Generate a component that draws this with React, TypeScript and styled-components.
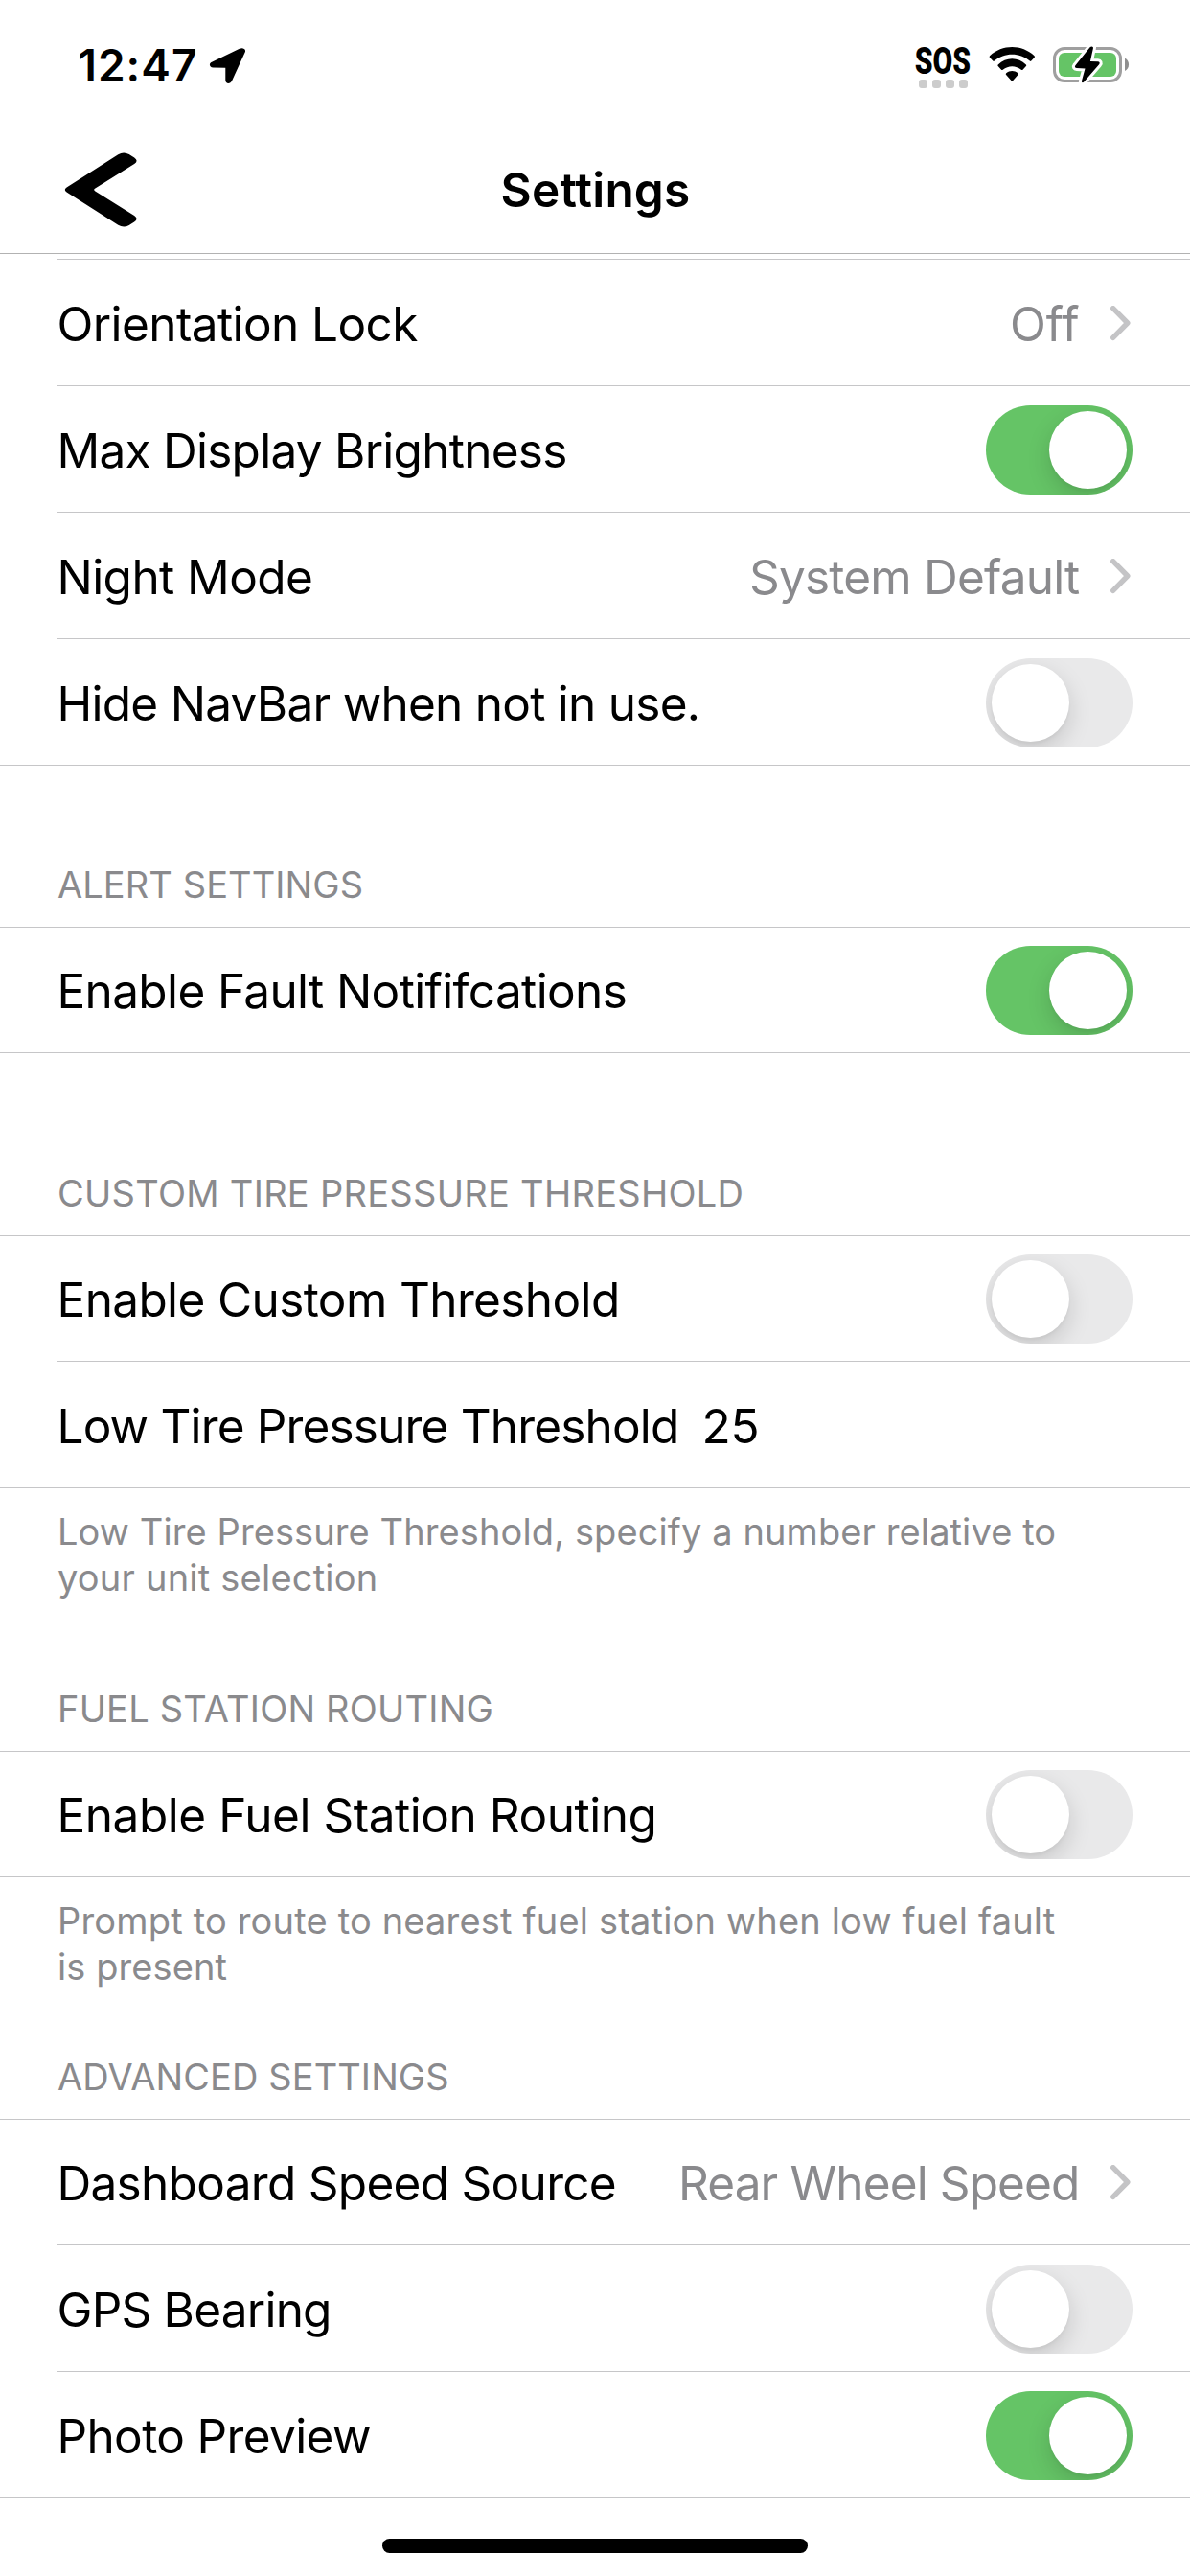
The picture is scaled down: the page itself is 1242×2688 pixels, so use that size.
import React from "react";
import styled, { createGlobalStyle } from "styled-components";

const Global = createGlobalStyle`
  * { box-sizing: border-box; }
  body {
    margin: 0;
    background: #fff;
    color: #000;
    font-family: Inter, "Liberation Sans", sans-serif;
  }
`;

const Screen = styled.div`
  width: 1242px;
  height: 2688px;
  display: flex;
  flex-direction: column;
  overflow: hidden;
  background: #fff;
`;

const StatusBar = styled.header`
  height: 136px;
  flex: none;
  display: flex;
  justify-content: space-between;
  align-items: flex-start;
  padding: 38px 63px 0 81.5px;
`;

const StatusGroup = styled.div<{ $gap: number }>`
  display: flex;
  align-items: flex-start;
  gap: ${(p) => p.$gap}px;
`;

const Time = styled.span`
  font-size: 46px;
  font-weight: 600;
  line-height: 60px;
  letter-spacing: 1px;
`;

const StatusIcon = styled.svg<{ $top: number; $end?: number }>`
  display: block;
  margin-top: ${(p) => p.$top}px;
  margin-right: ${(p) => p.$end ?? 0}px;
  overflow: visible;
`;

const Sos = styled.div`
  width: 59px;
  margin-top: 9px;
  display: flex;
  flex-direction: column;
  align-items: center;
`;

const SosText = styled.span`
  font: 900 38px/34px Roboto, sans-serif;
  transform: scaleX(0.79);
`;

const Dots = styled.div`
  display: flex;
  gap: 5px;
  margin-top: 2px;
`;

const Dot = styled.i`
  width: 9px;
  height: 9px;
  border-radius: 3px;
  background: #cccccc;
`;

const NavBar = styled.nav`
  height: 129px;
  flex: none;
  display: grid;
  grid-template-columns: 1fr auto 1fr;
  align-items: center;
  padding-bottom: 4px;
  border-bottom: 1px solid #b2b2b2;
`;

const BackButton = styled.button`
  justify-self: start;
  margin: 0 0 0 67px;
  padding: 0;
  border: 0;
  background: none;
  svg { display: block; }
`;

const Title = styled.h1`
  margin: 0;
  padding-left: 1px;
  font-size: 49.5px;
  font-weight: 600;
  line-height: 60px;
  letter-spacing: 0.2px;
`;

const Content = styled.main`
  flex: 1;
  padding-top: 5px;
`;

const Separator = styled.div<{ $inset?: boolean }>`
  height: 1px;
  margin-left: ${(p) => (p.$inset ? 60 : 0)}px;
  background: #c6c6c8;
`;

const RowBody = styled.div<{ $first?: boolean }>`
  height: ${(p) => (p.$first ? 130 : 131)}px;
  padding: ${(p) => (p.$first ? 1 : 2)}px 60px 0 59.5px;
  display: flex;
  align-items: center;
`;

const Label = styled.span<{ $tracking: number }>`
  font-size: 49.5px;
  line-height: 60px;
  white-space: nowrap;
  letter-spacing: ${(p) => p.$tracking}px;
`;

const Value = styled(Label)`
  margin-left: auto;
  margin-right: 31.5px;
  color: #8a8a8d;
`;

const FieldValue = styled(Label)`
  margin-left: 24px;
`;

const Track = styled.span<{ $on: boolean }>`
  width: 153px;
  height: 93px;
  margin-left: auto;
  padding: 6px;
  flex: none;
  display: flex;
  justify-content: ${(p) => (p.$on ? "flex-end" : "flex-start")};
  border-radius: 47px;
  overflow: hidden;
  background: ${(p) => (p.$on ? "#65c466" : "#e9e9ea")};
`;

const Knob = styled.span`
  width: 81px;
  height: 81px;
  border-radius: 50%;
  background: #fff;
  box-shadow: 0 9px 24px rgba(0, 0, 0, 0.15), 0 3px 3px rgba(0, 0, 0, 0.03);
`;

const Chevron = styled.svg`
  display: block;
  flex: none;
`;

const SectionHeader = styled.h2<{ $height: number; $tracking: number }>`
  height: ${(p) => p.$height}px;
  margin: 0;
  padding: 0 0 20px 60px;
  display: flex;
  align-items: flex-end;
  color: #8a8a8d;
  font-size: 38px;
  font-weight: 400;
  line-height: 48px;
  letter-spacing: ${(p) => p.$tracking}px;
`;

const Footnote = styled.p`
  margin: 0;
  padding: 21px 0 0 60px;
  color: #8a8a8d;
  font-size: 38px;
  line-height: 48px;
  white-space: nowrap;
`;

const FootnoteLine = styled.span<{ $tracking: number }>`
  display: block;
  letter-spacing: ${(p) => p.$tracking}px;
`;

const HomeArea = styled.footer`
  height: 39px;
  flex: none;
  display: flex;
  justify-content: center;
`;

const HomeIndicator = styled.div`
  width: 444px;
  height: 15px;
  border-radius: 8px;
  background: #000;
`;

type RowData = {
  label: string;
  tracking: number;
  on?: boolean;
  value?: string;
  valueTracking?: number;
  field?: string;
};

type SectionData = {
  title?: string;
  titleTracking?: number;
  headerHeight?: number;
  rows: RowData[];
  note?: [string, number][];
};

const sections: SectionData[] = [
  {
    rows: [
      { label: "Orientation Lock", tracking: -0.59, value: "Off", valueTracking: 0 },
      { label: "Max Display Brightness", tracking: -0.74, on: true },
      { label: "Night Mode", tracking: -0.58, value: "System Default", valueTracking: -0.8 },
      { label: "Hide NavBar when not in use.", tracking: -0.74, on: false },
    ],
  },
  {
    title: "ALERT SETTINGS",
    titleTracking: 0.08,
    headerHeight: 168,
    rows: [{ label: "Enable Fault Notififcations", tracking: -0.64, on: true }],
  },
  {
    title: "CUSTOM TIRE PRESSURE THRESHOLD",
    titleTracking: 0.28,
    headerHeight: 190,
    rows: [
      { label: "Enable Custom Threshold", tracking: -0.62, on: false },
      { label: "Low Tire Pressure Threshold", tracking: -0.83, field: "25" },
    ],
    note: [
      ["Low Tire Pressure Threshold, specify a number relative to", 0.1],
      ["your unit selection", 0.22],
    ],
  },
  {
    title: "FUEL STATION ROUTING",
    titleTracking: 0.2,
    headerHeight: 157,
    rows: [{ label: "Enable Fuel Station Routing", tracking: -0.46, on: false }],
    note: [
      ["Prompt to route to nearest fuel station when low fuel fault", 0.18],
      ["is present", 0.09],
    ],
  },
  {
    title: "ADVANCED SETTINGS",
    titleTracking: 0.08,
    headerHeight: 135,
    rows: [
      { label: "Dashboard Speed Source", tracking: -0.7, value: "Rear Wheel Speed", valueTracking: -0.88 },
      { label: "GPS Bearing", tracking: -0.78, on: false },
      { label: "Photo Preview", tracking: -0.63, on: true },
    ],
  },
];

function Row({ row, first, last }: { row: RowData; first: boolean; last: boolean }) {
  return (
    <>
      <RowBody $first={first}>
        <Label $tracking={row.tracking}>{row.label}</Label>
        {row.field && <FieldValue $tracking={-0.2}>{row.field}</FieldValue>}
        {row.value && (
          <>
            <Value $tracking={row.valueTracking ?? 0}>{row.value}</Value>
            <Chevron width="24" height="38" viewBox="0 0 24 38">
              <path d="M3.7 2.7 L18.8 18 L3.7 33.3" fill="none" stroke="#c4c4c6" strokeWidth="5.4" strokeLinecap="round" strokeLinejoin="round" />
            </Chevron>
          </>
        )}
        {row.on !== undefined && (
          <Track $on={row.on} role="switch" aria-checked={row.on}>
            <Knob />
          </Track>
        )}
      </RowBody>
      <Separator $inset={!last} />
    </>
  );
}

function Section({ data }: { data: SectionData }) {
  return (
    <section>
      {data.title ? (
        <>
          <SectionHeader $height={data.headerHeight ?? 168} $tracking={data.titleTracking ?? 0}>
            {data.title}
          </SectionHeader>
          <Separator />
        </>
      ) : (
        <Separator $inset />
      )}
      {data.rows.map((row, i) => (
        <Row
          key={row.label}
          row={row}
          first={i === 0 && !!data.title}
          last={i === data.rows.length - 1}
        />
      ))}
      {data.note && (
        <Footnote>
          {data.note.map(([text, tracking]) => (
            <FootnoteLine key={text} $tracking={tracking}>{text}</FootnoteLine>
          ))}
        </Footnote>
      )}
    </section>
  );
}

export default function App() {
  return (
    <>
      <Global />
      <Screen>
        <StatusBar>
          <StatusGroup $gap={12.5}>
            <Time>12:47</Time>
            <StatusIcon $top={12} width="37" height="37" viewBox="0 0 37 37">
              <path d="M31 .8 C34.6 -.9 38.2 1.5 36.7 4.6 L23.2 34 C21.4 38.1 16.3 37.8 16.3 33.4 V20.7 L3.3 20.5 C-.6 20.4 -1.3 16.2 2 14.7 Z" />
            </StatusIcon>
          </StatusGroup>
          <StatusGroup $gap={18}>
            <Sos>
              <SosText>SOS</SosText>
              <Dots><Dot /><Dot /><Dot /><Dot /></Dots>
            </Sos>
            <StatusIcon $top={11} $end={1.5} width="48" height="36" viewBox="0 0 48 36">
              <path d="M1 9.3 C14 -3.1 34.6 -3.1 47.6 9.3 Q48.4 10.2 47.6 11 L44.3 14.6 Q43.6 15.3 42.8 14.6 C32.3 5.6 16.3 5.6 5.8 14.6 Q5 15.3 4.3 14.6 L1 11 Q.2 10.2 1 9.3 Z" />
              <path d="M9.7 18.4 C18 10.3 30.6 10.3 38.9 18.4 Q39.7 19.3 38.9 20.1 L35.5 23.7 Q34.8 24.4 33.9 23.7 C28.2 19 20.4 19 14.7 23.7 Q13.8 24.4 13.1 23.7 L9.7 20.1 Q8.9 19.3 9.7 18.4 Z" />
              <path d="M18.2 27.2 C21.8 24.3 26.8 24.3 30.4 27.2 Q31.4 28.1 30.5 29.1 L25.2 35 Q24.3 35.9 23.4 35 L18.1 29.1 Q17.2 28.1 18.2 27.2 Z" />
            </StatusIcon>
            <StatusIcon $top={11} width="80" height="37" viewBox="0 0 80 37">
              <rect x="1.5" y="1.5" width="69" height="34" rx="10.5" fill="none" stroke="#9f9f9f" strokeWidth="3" />
              <rect x="6" y="6" width="60" height="25" rx="6" fill="#65c466" />
              <path d="M75 11.8 C80.4 14 80.4 22.8 75 25 Z" fill="#8f8f8f" />
              <path
                d="M38.6 .3 C40 -1.2 42.4 -.6 41.9 1.4 L38.9 14.9 L46.8 15.3 C48.7 15.4 49.3 16.9 48.1 18.2 L32.3 36.6 C31 38 29.5 37.2 30 35.3 L33.5 22.6 L24.8 22.1 C23 22 22.3 20.6 23.4 19.3 Z"
                fill="#000" stroke="#fff" strokeWidth="6" strokeLinejoin="round" paintOrder="stroke"
              />
            </StatusIcon>
          </StatusGroup>
        </StatusBar>
        <NavBar>
          <BackButton aria-label="Back">
            <svg width="76" height="78" viewBox="0 0 76 78">
              <path d="M2.6 36.4 L56.3 2.2 Q62 -1.2 67.7 2 L73.2 5.4 Q78 8.7 73.2 12 L32 37.8 Q30.4 39 32 40.2 L73.2 66 Q78 69.3 73.2 72.6 L67.7 76 Q62 79.2 56.3 75.8 L2.6 41.6 Q-1 39 2.6 36.4 Z" />
            </svg>
          </BackButton>
          <Title>Settings</Title>
        </NavBar>
        <Content>
          {sections.map((s, i) => (
            <Section key={i} data={s} />
          ))}
        </Content>
        <HomeArea>
          <HomeIndicator />
        </HomeArea>
      </Screen>
    </>
  );
}
